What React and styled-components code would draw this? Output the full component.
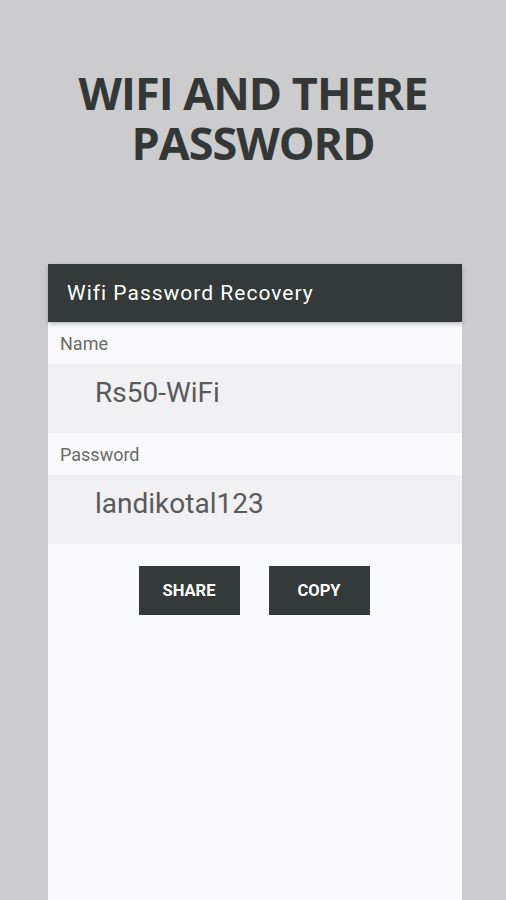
import React from "react";
import styled, { createGlobalStyle } from "styled-components";

const Global = createGlobalStyle`
  html, body { margin: 0; padding: 0; background: #cccbcd; }
  body { font-family: Roboto, "Noto Sans", sans-serif; }
`;

const Page = styled.div`
  width: 506px;
  height: 900px;
  background: #cccbcd;
  display: flex;
  flex-direction: column;
  align-items: center;
  overflow: hidden;
`;

const Title = styled.h1`
  margin: 68px 0 0;
  font-family: "Open Sans", sans-serif;
  font-weight: 700;
  font-size: 45px;
  line-height: 50px;
  letter-spacing: -1px;
  color: #333736;
  text-align: center;
`;

const Panel = styled.div`
  margin-top: 96px;
  margin-left: 48px;
  align-self: flex-start;
  width: 414px;
  flex: 1;
  background: #faf9fb;
  display: flex;
  flex-direction: column;
`;

const AppBar = styled.div`
  height: 58px;
  background: #333a39;
  display: flex;
  align-items: center;
  padding-left: 19px;
  color: #ffffff;
  font-size: 21px;
  letter-spacing: 1px;
  box-shadow: 0 2px 4px rgba(0, 0, 0, 0.25);
  position: relative;
  z-index: 1;
`;

const Label = styled.div`
  height: 42px;
  display: flex;
  align-items: center;
  padding-left: 12px;
  font-size: 18px;
  color: #6a6a6a;
`;

const Field = styled.div`
  height: 69px;
  background: #f1f0f2;
  display: flex;
  align-items: center;
  padding-left: 47px;
  padding-bottom: 12px;
  box-sizing: border-box;
  font-size: 28px;
  color: #5a5a5a;
`;

const Buttons = styled.div`
  display: flex;
  justify-content: center;
  gap: 29px;
  margin-top: 22px;
  padding-right: 2px;
`;

const Button = styled.button`
  width: 101px;
  height: 49px;
  border: none;
  background: #333a39;
  color: #ffffff;
  font-family: Roboto, sans-serif;
  font-weight: 700;
  font-size: 16.5px;
  padding: 0;
`;

export default function App() {
  return (
    <>
      <Global />
      <Page>
        <Title>
          WIFI AND THERE
          <br />
          PASSWORD
        </Title>
        <Panel>
          <AppBar>Wifi Password Recovery</AppBar>
          <Label>Name</Label>
          <Field>Rs50-WiFi</Field>
          <Label>Password</Label>
          <Field>landikotal123</Field>
          <Buttons>
            <Button>SHARE</Button>
            <Button>COPY</Button>
          </Buttons>
        </Panel>
      </Page>
    </>
  );
}
